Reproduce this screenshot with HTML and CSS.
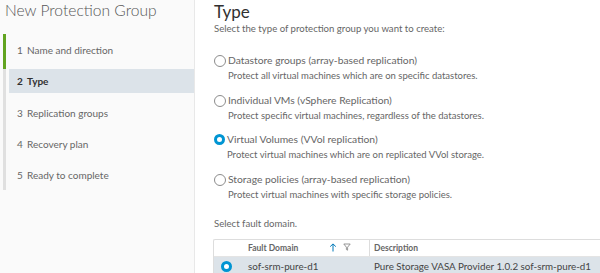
FILE: index.html
```html
<!DOCTYPE html>
<html lang="en">
<head>
  <meta charset="UTF-8" />
  <title>New Protection Group</title>
  <link rel="stylesheet" href="styles.css">
</head>
<body>
  <div class="wizard">
    <aside class="sidebar">
      <h1>New Protection Group</h1>
      <ol class="steps">
        <li class="done"><span class="num">1</span>Name and direction</li>
        <li class="active"><span class="num">2</span>Type</li>
        <li><span class="num">3</span>Replication groups</li>
        <li><span class="num">4</span>Recovery plan</li>
        <li><span class="num">5</span>Ready to complete</li>
      </ol>
    </aside>

    <main class="content">
      <h2>Type</h2>
      <p class="lead">Select the type of protection group you want to create:</p>

      <div class="options">
        <label class="option">
          <span class="radio"></span>
          <span class="option-text">
            <span class="option-title">Datastore groups (array-based replication)</span>
            <span class="option-desc">Protect all virtual machines which are on specific datastores.</span>
          </span>
        </label>
        <label class="option">
          <span class="radio"></span>
          <span class="option-text">
            <span class="option-title">Individual VMs (vSphere Replication)</span>
            <span class="option-desc">Protect specific virtual machines, regardless of the datastores.</span>
          </span>
        </label>
        <label class="option">
          <span class="radio checked"></span>
          <span class="option-text">
            <span class="option-title">Virtual Volumes (VVol replication)</span>
            <span class="option-desc">Protect virtual machines which are on replicated VVol storage.</span>
          </span>
        </label>
        <label class="option">
          <span class="radio"></span>
          <span class="option-text">
            <span class="option-title">Storage policies (array-based replication)</span>
            <span class="option-desc">Protect virtual machines with specific storage policies.</span>
          </span>
        </label>
      </div>

      <p class="fault-label">Select fault domain.</p>

      <div class="grid">
        <div class="grid-row grid-head">
          <div class="cell sel"></div>
          <div class="cell domain">
            Fault Domain
            <span class="head-icons">
              <svg width="8" height="9" viewBox="0 0 8 9"><path d="M4 8.5V1M1.2 3.6L4 0.9l2.8 2.7" fill="none" stroke="#0079b8" stroke-width="1"/></svg>
              <svg width="8" height="8" viewBox="0 0 8 8"><path d="M0.8 1h6.4L4.6 4.2V7.2L3.4 6.6V4.2z" fill="none" stroke="#8a8a8a" stroke-width="0.9"/></svg>
            </span>
          </div>
          <div class="cell desc">Description</div>
        </div>
        <div class="grid-row selected">
          <div class="cell sel"><span class="radio checked"></span></div>
          <div class="cell domain">sof-srm-pure-d1</div>
          <div class="cell desc">Pure Storage VASA Provider 1.0.2 sof-srm-pure-d1</div>
        </div>
      </div>
    </main>
  </div>
</body>
</html>
```

FILE: styles.css
```css
body {
  margin: 0;
  font-family: Lato, 'Open Sans', sans-serif;
  background: #fff;
  color: #565656;
  overflow: hidden;
}
.wizard {
  display: flex;
  height: 273px;
}
.sidebar {
  width: 194px;
  flex-shrink: 0;
  background: #fafafa;
  border-right: 1px solid #e8e8e8;
}
.sidebar h1 {
  margin: 0;
  padding: 0 0 0 5px;
  height: 34px;
  line-height: 21px;
  font-size: 15.6px;
  font-weight: 300;
  color: #565656;
}
.steps {
  list-style: none;
  margin: 0 0 0 3px;
  padding: 0;
  border-left: 3px solid #e0e0e0;
}
.steps li {
  height: 31px;
  line-height: 32px;
  font-size: 10px;
  color: #666;
  padding-left: 8px;
  margin-left: 3px;
  white-space: nowrap;
}
.steps li.done {
  margin-left: -3px;
  padding-left: 11px;
  border-left: 3px solid #62a420;
  height: 35px;
  line-height: 33px;
}
.steps li.active {
  background: #dce3e9;
  color: #313131;
  font-weight: 700;
  height: 24px;
  line-height: 24px;
  margin-bottom: 4px;
}
.steps .num {
  display: inline-block;
  width: 10px;
}
.content {
  flex: 1;
  padding: 0 0 0 19px;
  min-width: 0;
}
.content h2 {
  margin: 0;
  padding-top: 2px;
  font-size: 17px;
  font-weight: 400;
  line-height: 19px;
  color: #313131;
}
.lead {
  margin: 0;
  font-size: 9.6px;
  line-height: 15px;
  color: #666;
}
.options {
  margin-top: 17px;
  display: flex;
  flex-direction: column;
  gap: 8.5px;
}
.option {
  display: flex;
  gap: 2px;
  color: #666;
  white-space: nowrap;
}
.option-text {
  display: flex;
  flex-direction: column;
}
.option-title {
  font-size: 10.3px;
  line-height: 15px;
}
.option-desc {
  font-size: 9.5px;
  line-height: 16px;
}
.radio {
  width: 10px;
  height: 10px;
  margin-top: 2px;
  border: 1px solid #8c8c8c;
  border-radius: 50%;
  background: #fff;
  flex-shrink: 0;
}
.radio.checked {
  border: 3.5px solid #0095d3;
  width: 5px;
  height: 5px;
}
.fault-label {
  margin: 14px 0 8px;
  font-size: 9.6px;
  color: #666;
  line-height: 14px;
}
.grid {
  margin-left: -1px;
  border: 1px solid #ddd;
  border-right: none;
  border-radius: 2px 0 0 0;
}
.grid-row {
  display: flex;
  height: 16px;
  align-items: center;
  white-space: nowrap;
}
.grid-head {
  font-size: 8.5px;
  font-weight: 700;
  color: #666;
  border-bottom: 1px solid #e4e4e4;
}
.grid-row.selected {
  height: 19px;
  background: #dce3e9;
  font-size: 9.8px;
  color: #444;
}
.cell {
  height: 100%;
  display: flex;
  align-items: center;
  box-sizing: border-box;
}
.sel {
  width: 25px;
  justify-content: center;
}
.sel .radio {
  margin-top: 0;
}
.domain {
  width: 131px;
  padding-left: 9px;
  justify-content: space-between;
}
.head-icons {
  display: flex;
  gap: 6px;
  margin-right: 18px;
}
.grid-head .domain {
  border-right: 1px solid #ddd;
}
.desc {
  flex: 1;
  padding-left: 4px;
}
```
